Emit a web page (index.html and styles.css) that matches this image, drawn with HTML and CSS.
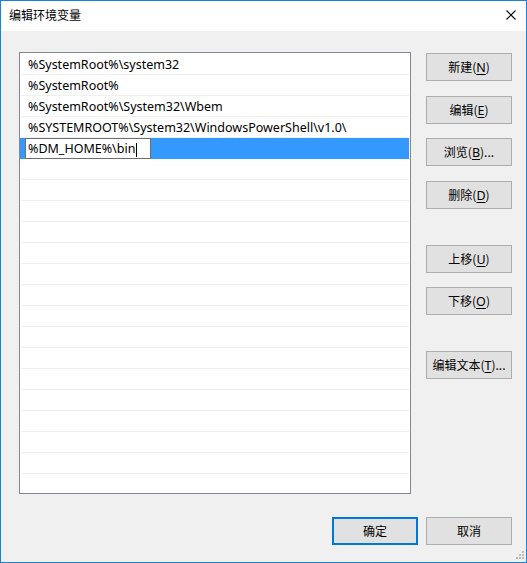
FILE: index.html
```html
<!DOCTYPE html>
<html lang="zh-CN">
<head>
<meta charset="utf-8">
<title>编辑环境变量</title>
<link rel="stylesheet" href="styles.css">
</head>
<body>
<div class="window">
  <div class="titlebar">
    <span class="title">编辑环境变量</span>
    <svg class="close" width="10" height="10" viewBox="0 0 10 10"><path d="M0.5 0.5L9.5 9.5M9.5 0.5L0.5 9.5" stroke="#000" stroke-width="1.1" fill="none"/></svg>
  </div>
  <div class="content">
    <div class="main">
      <div class="list">
        <div class="row">%SystemRoot%\system32</div>
        <div class="row">%SystemRoot%</div>
        <div class="row">%SystemRoot%\System32\Wbem</div>
        <div class="row">%SYSTEMROOT%\System32\WindowsPowerShell\v1.0\</div>
        <div class="row selected"><span class="edit">%DM_HOME%\bin<span class="caret"></span></span></div>
        <div class="row"></div><div class="row"></div><div class="row"></div><div class="row"></div><div class="row"></div>
        <div class="row"></div><div class="row"></div><div class="row"></div><div class="row"></div><div class="row"></div>
        <div class="row"></div><div class="row"></div><div class="row"></div><div class="row"></div><div class="row"></div>
      </div>
      <div class="buttons">
        <button class="btn b-new">新建(<u>N</u>)</button>
        <button class="btn b-edit">编辑(<u>E</u>)</button>
        <button class="btn b-browse">浏览(<u>B</u>)...</button>
        <button class="btn b-del">删除(<u>D</u>)</button>
        <button class="btn b-up">上移(<u>U</u>)</button>
        <button class="btn b-down">下移(<u>O</u>)</button>
        <button class="btn b-text">编辑文本(<u>T</u>)...</button>
      </div>
    </div>
    <div class="footer">
      <button class="btn default">确定</button>
      <button class="btn">取消</button>
    </div>
  </div>
  <div class="grip">
    <i class="d1"></i><i class="d2"></i><i class="d3"></i><i class="d4"></i><i class="d5"></i><i class="d6"></i>
  </div>
</div>
</body>
</html>
```
FILE: styles.css
```css
html, body {
  margin: 0;
  padding: 0;
  background: #f0f0f0;
}
body {
  font-family: "Noto Sans", "Noto Sans CJK SC", sans-serif;
  font-size: 12px;
  color: #000;
}
.window {
  position: relative;
  width: 527px;
  height: 563px;
  box-sizing: border-box;
  border: 1px solid #1883d7;
  background: #f0f0f0;
  display: flex;
  flex-direction: column;
}
.titlebar {
  height: 30px;
  background: #fff;
  display: flex;
  align-items: center;
  justify-content: space-between;
  padding: 0 10px 2px 8px;
  box-sizing: border-box;
}
.title {
  font-family: "Noto Sans CJK SC", sans-serif;
  font-size: 12px;
  line-height: 16px;
}
.close {
  display: block;
}
.content {
  flex: 1;
  padding: 21px 14px 0 18px;
  display: flex;
  flex-direction: column;
}
.main {
  display: flex;
  gap: 15px;
}
.list {
  width: 392px;
  height: 442px;
  box-sizing: border-box;
  border: 1px solid #828790;
  background: #fff;
  padding-top: 1px;
  overflow: hidden;
}
.row {
  height: 20px;
  border-bottom: 1px solid #f0f0f0;
  margin: 0 1px;
  padding-left: 7px;
  padding-top: 1px;
  box-sizing: content-box;
  height: 19px;
  line-height: 19px;
  white-space: nowrap;
  font-family: "Noto Sans", "Noto Sans CJK SC", sans-serif;
  font-size: 12.5px;
}
.row.selected {
  background: #3399ff;
  padding-left: 5px;
  padding-top: 0;
  height: 20px;
  margin: 0 1px 0 0;
  border-bottom-color: #3399ff;
}
.edit {
  display: inline-block;
  box-sizing: border-box;
  width: 126px;
  height: 21px;
  background: #fff;
  border: 1px solid #6e6e6e;
  padding: 1px 0 0 2px;
  line-height: 18px;
  vertical-align: top;
}
.caret {
  display: inline-block;
  width: 1px;
  height: 14px;
  background: #000;
  vertical-align: middle;
  margin-left: 1px;
}
.buttons {
  display: flex;
  flex-direction: column;
  padding-top: 1px;
}
.btn {
  width: 86px;
  height: 28px;
  box-sizing: border-box;
  background: #e1e1e1;
  border: 1px solid #adadad;
  font-family: "Noto Sans CJK SC", sans-serif;
  font-size: 12px;
  color: #000;
  padding: 0;
  margin: 0;
  line-height: 16px;
}
.btn u {
  font-family: "Noto Sans", sans-serif;
  font-size: 12.5px;
  text-underline-offset: 2px;
}
.b-edit { margin-top: 15px; }
.b-browse { margin-top: 14px; }
.b-del { margin-top: 15px; }
.b-up { margin-top: 36px; }
.b-down { margin-top: 14px; }
.b-text { margin-top: 36px; }
.footer {
  display: flex;
  justify-content: flex-end;
  gap: 8px;
  margin-top: 23px;
}
.btn.default {
  border: 2px solid #0078d7;
}
.grip {
  position: absolute;
  right: 2px;
  bottom: 2px;
  width: 9px;
  height: 9px;
}
.grip i {
  position: absolute;
  width: 2px;
  height: 2px;
  background: #bcbcbc;
}
.grip .d1 { right: 0; top: 0; }
.grip .d2 { right: 0; top: 3px; }
.grip .d3 { right: 3px; top: 3px; }
.grip .d4 { right: 0; top: 6px; }
.grip .d5 { right: 3px; top: 6px; }
.grip .d6 { right: 6px; top: 6px; }
```
